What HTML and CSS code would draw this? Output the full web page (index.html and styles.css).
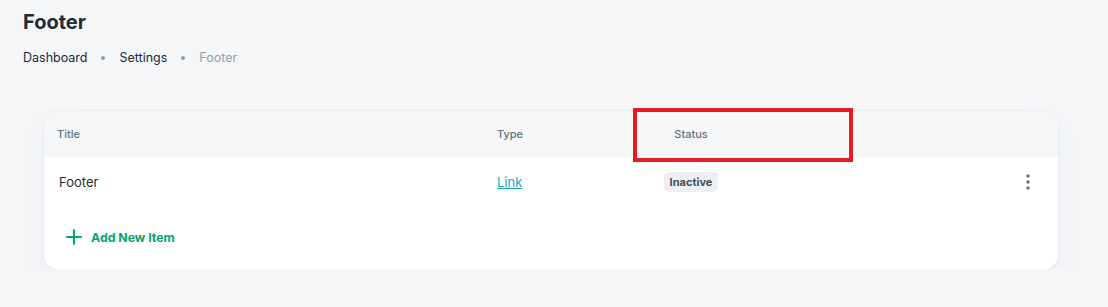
FILE: index.html
```html
<!DOCTYPE html>
<html lang="en">
<head>
    <meta charset="UTF-8">
    <meta name="viewport" content="width=device-width, initial-scale=1.0">
    <title>Footer</title>
    <link rel="stylesheet" href="styles.css">
</head>
<body>
    <div class="page">
        <h1 class="page-title">Footer</h1>
        <nav class="breadcrumbs">
            <span class="crumb">Dashboard</span>
            <span class="crumb-dot"></span>
            <span class="crumb">Settings</span>
            <span class="crumb-dot"></span>
            <span class="crumb current">Footer</span>
        </nav>

        <div class="card">
            <div class="table-row table-head">
                <div class="cell">Title</div>
                <div class="cell">Type</div>
                <div class="cell center">Status</div>
                <div class="cell"></div>
            </div>
            <div class="table-row table-body">
                <div class="cell">Footer</div>
                <div class="cell"><a href="#" class="type-link">Link</a></div>
                <div class="cell center"><span class="badge">Inactive</span></div>
                <div class="cell actions">
                    <button class="more-btn" aria-label="More">
                        <svg width="4" height="16" viewBox="0 0 4 16">
                            <circle cx="2" cy="2" r="1.7" fill="#637381"/>
                            <circle cx="2" cy="8" r="1.7" fill="#637381"/>
                            <circle cx="2" cy="14" r="1.7" fill="#637381"/>
                        </svg>
                    </button>
                </div>
            </div>
            <div class="card-footer">
                <button class="add-btn">
                    <svg width="16" height="16" viewBox="0 0 16 16">
                        <path d="M8 1v14M1 8h14" stroke="#00a76f" stroke-width="2" stroke-linecap="round"/>
                    </svg>
                    Add New Item
                </button>
            </div>
        </div>
    </div>

    <!-- highlight box from the screenshot annotation -->
    <div class="highlight"></div>
</body>
</html>
```

FILE: styles.css
```css
body {
    margin: 0;
    background: #f4f6f8;
    font-family: Inter, "Noto Sans", sans-serif;
    color: #212b36;
}

.page {
    padding: 6px 23px 0 23px;
}

.page-title {
    margin: 0;
    font-size: 20px;
    line-height: 32px;
    font-weight: 700;
    color: #212b36;
}

.breadcrumbs {
    display: flex;
    align-items: center;
    gap: 14px;
    margin-top: 9px;
    font-size: 12.5px;
    line-height: 22px;
}

.crumb.current {
    color: #919eab;
}

.crumb-dot {
    width: 4px;
    height: 4px;
    border-radius: 50%;
    background: #919eab;
}

/* Card */
.card {
    margin: 42px 27px 0 21px;
    background: white;
    border-radius: 14px;
    overflow: hidden;
    box-shadow: 0 0 2px rgba(145,158,171,0.2), 0 12px 24px -4px rgba(145,158,171,0.12);
}

.table-row {
    display: grid;
    grid-template-columns: 440px 140px 108px 1fr;
    align-items: center;
    padding-left: 13px;
}

.table-head {
    height: 46px;
    background: #f4f6f8;
    font-size: 11px;
    font-weight: 500;
    color: #637381;
}

.table-body {
    height: 50px;
    font-size: 13px;
    color: #212b36;
}

.table-body .cell:first-child {
    padding-left: 2px;
}

.cell.center {
    text-align: center;
}

.type-link {
    color: #16a9c4;
    text-decoration: underline;
}

.badge {
    display: inline-block;
    padding: 0 6px;
    height: 20px;
    line-height: 20px;
    border-radius: 5px;
    background: #edeff1;
    color: #454f5b;
    font-size: 11px;
    font-weight: 700;
}

.actions {
    display: flex;
    justify-content: flex-end;
    padding-right: 22px;
}

.more-btn {
    background: none;
    border: none;
    padding: 4px 6px;
    cursor: pointer;
    display: flex;
}

.card-footer {
    height: 60px;
    display: flex;
    align-items: center;
    padding: 0 0 2px 22px;
}

.add-btn {
    display: flex;
    align-items: center;
    gap: 9px;
    background: none;
    border: none;
    padding: 0;
    font-family: inherit;
    font-size: 12.3px;
    font-weight: 700;
    color: #00a76f;
    cursor: pointer;
}

.highlight {
    position: absolute;
    left: 633px;
    top: 108px;
    width: 212px;
    height: 46px;
    border: 4px solid #e51c23;
}
```
